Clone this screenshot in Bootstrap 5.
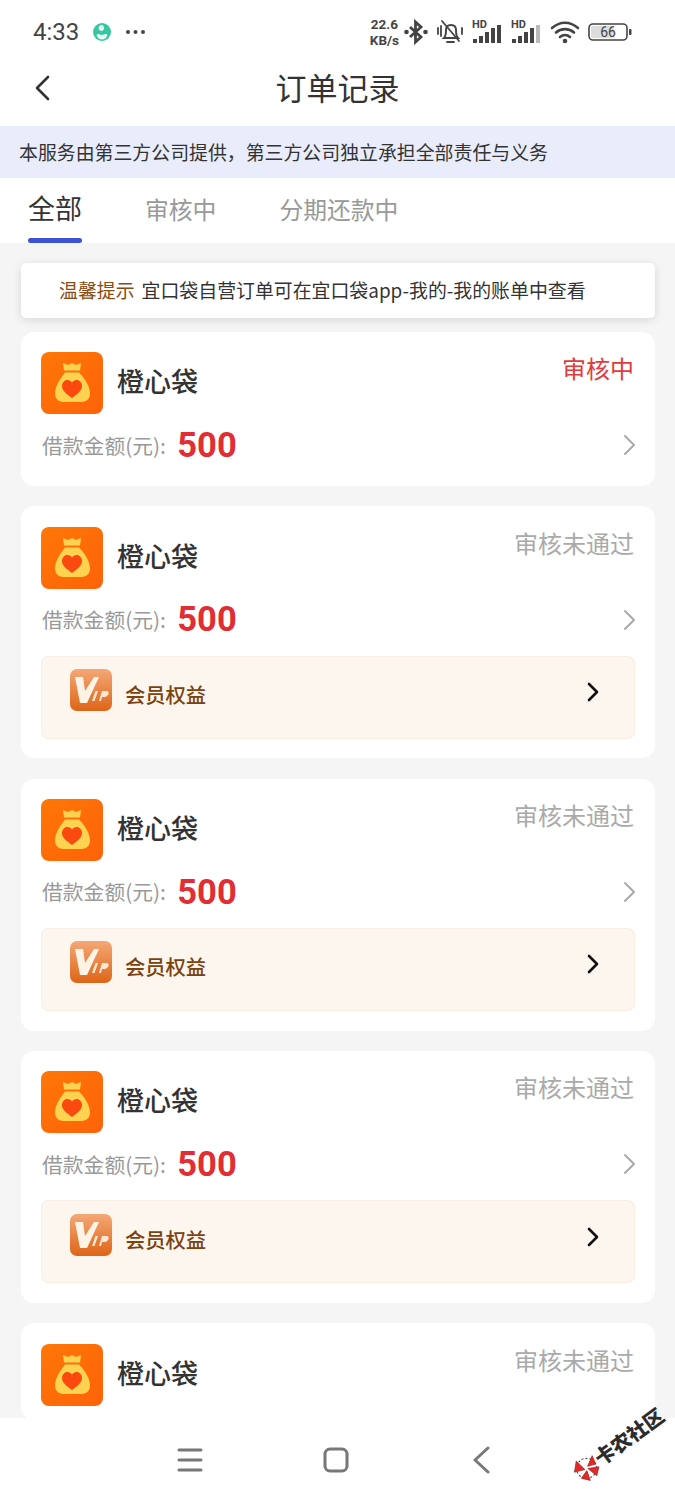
<!DOCTYPE html>
<html lang="zh-CN">

<head>
  <meta charset="UTF-8" />
  <meta name="viewport" content="width=device-width, initial-scale=1.0" />
  <title>订单记录</title>
  <link href="https://cdn.jsdelivr.net/npm/bootstrap@5.3.0/dist/css/bootstrap.min.css" rel="stylesheet" />
  <style>
    body { font-family: "Noto Sans CJK SC", "Noto Sans", sans-serif; background: #fff; color: #333; }
    .app-shell { width: 675px; height: 1500px; overflow: hidden; position: relative; }

    .status-bar { height: 63px; padding: 0 43px 0 33px; color: #444; }
    .status-time { font-family: Roboto, sans-serif; font-size: 24px; line-height: 1; }
    .status-globe { margin-left: 13px; }
    .status-dots { margin-left: 13px; }
    .status-speed { font-family: Roboto, sans-serif; font-size: 13.500px; line-height: 16px; height: 32px; font-weight: 700; text-align: center; margin-right: -3px; }
    .signal-box { position: relative; width: 31px; height: 22px; }
    .signal-box span { position: absolute; left: 0; top: -2px; font: 700 11px/11px Roboto, sans-serif; }
    .signal-box svg { position: absolute; left: 1px; bottom: 0; }
    .battery-num { font-family: Roboto, sans-serif; }

    .top-bar { height: 63px; padding-bottom: 17px; position: relative; }
    .top-title { font-size: 31px; line-height: 1; color: #333; }
    .back-btn { position: absolute; left: 33px; top: 11px; }

    .notice-bar { height: 52px; background: #e9edfb; padding-left: 19px; font-size: 18.900px; color: #333; }

    .tab-bar { height: 65px; padding-left: 28px; gap: 63px; }
    .tab-item { font-size: 23.800px; color: #999; line-height: 1; padding-top: 19px; }
    .tab-item.on { font-size: 27px; color: #333; padding-top: 16px; height: 65px; border-bottom: 5px solid transparent; position: relative; }
    .tab-item.on::after { content: ""; position: absolute; left: 0; right: 0; bottom: -5px; height: 5px; border-radius: 3px; background: #3d52d5; }

    .order-scroll { background: #f5f5f5; height: 1175px; padding: 20px 20px 0 21px; overflow: hidden; }
    .tip-strip { height: 55px; background: #fff; border-radius: 5px; box-shadow: 0 2px 10px rgba(0, 0, 0, .12); padding-left: 38px; font-size: 18.900px; color: #333; margin-bottom: 14px; }
    .tip-strip b { font-weight: 400; color: #8a4b12; margin-right: 7px; }

    .order-item { background: #fff; border-radius: 13px; padding: 20.400px 20px 14.600px 20px; margin-bottom: 20.300px; }
    .brand-icon { width: 62px; height: 62px; flex: none; }
    .brand-name { font-size: 27px; color: #333; margin-left: 14px; line-height: 58px; padding-bottom: 4px; font-weight: 500; }
    .order-state { margin-left: auto; font-size: 24px; line-height: 1; color: #aaa; align-self: flex-start; margin-top: 4px; padding-right: 1px; }
    .order-state.doing { color: #e23a3a; }
    .amount-row { height: 52px; margin-top: 5px; }
    .amount-label { font-size: 20.800px; color: #999; padding-left: 1px; }
    .amount-val { font-family: Roboto, sans-serif; font-weight: 700; font-size: 34.500px; line-height: 1; color: #e22d33; margin-left: 11.500px; }
    .amount-arrow { margin-left: auto; margin-right: -2px; }
    .vip-box { height: 83px; margin-top: 10px; margin-bottom: 5px; background: #fdf6ee; border: 1px solid #f8eee2; border-radius: 7px; padding: 0 34px 6px 28px; }
    .vip-icon { width: 42px; height: 42px; flex: none; margin-bottom: 8px; }
    .vip-text { font-size: 20.300px; font-weight: 500; color: #7a4310; margin-left: 13px; }
    .vip-arrow { margin-left: auto; margin-bottom: 4px; }

    .bottom-nav { position: absolute; left: 0; right: 0; top: 1418px; height: 82px; background: #fff; }
    .sys-btn { position: absolute; top: 28px; }
    .sys-menu { left: 176px; }
    .sys-home { left: 322px; }
    .sys-back { left: 470px; }

    .watermark { position: absolute; left: 576px; top: 1463px; transform: rotate(-36deg); transform-origin: left center; font-size: 20px; font-weight: 900; color: #2c2c2c; line-height: 1; white-space: nowrap; }
    .watermark svg { vertical-align: -6px; margin-right: 0; }
  </style>
</head>

<body>
  <svg width="0" height="0" class="position-absolute">
    <defs>
      <linearGradient id="bagBg" x1="0" y1="0" x2="1" y2="1">
        <stop offset="0" stop-color="#ff7706" />
        <stop offset="1" stop-color="#ff620a" />
      </linearGradient>
      <linearGradient id="vipBg" x1="0" y1="0" x2="0" y2="1">
        <stop offset="0" stop-color="#f4a877" />
        <stop offset="1" stop-color="#dd6517" />
      </linearGradient>
      <symbol id="bag" viewBox="0 0 62 62">
        <rect width="62" height="62" rx="8" fill="url(#bagBg)" />
        <path d="M22 11l5 2 4-2 4 2 5-2-1 7.500H23z" fill="#ffd34f" />
        <path d="M24 20.500h14c3 3 11 12 11 21 0 6-4 8.500-10 8.500H24c-6 0-10-2.500-10-8.500 0-9 8-18 10-21z" fill="#ffd34f" />
        <path d="M31 46c-5.500-4-10-7.500-10-12 0-3.400 2.500-6 5.400-6 2 0 3.600 1 4.600 2.700 1-1.700 2.600-2.700 4.600-2.700 2.900 0 5.400 2.600 5.400 6 0 4.500-4.500 8-10 12z" fill="#fb4a10" />
      </symbol>
      <symbol id="vipMark" viewBox="0 0 42 42">
        <rect width="42" height="42" rx="7" fill="url(#vipBg)" />
        <path d="M5 8h8l2 14 9-14h5L17 34h-7z" fill="#fff3e6" />
        <path d="M22 32l3.500-10h2.500l-3.500 10zM29 32l3-10h4.500c2 0 2.500 1.500 2 3s-2 3-4 3H32l-1 4z" fill="#fff3e6" opacity=".9" />
      </symbol>
      <symbol id="chevGrey" viewBox="0 0 14 22">
        <path d="M2 2l9 9-9 9" fill="none" stroke="#aaa" stroke-width="2" stroke-linecap="round" stroke-linejoin="round" />
      </symbol>
      <symbol id="chevDark" viewBox="0 0 14 22">
        <path d="M3 3l8 8-8 8" fill="none" stroke="#111" stroke-width="2.600" stroke-linecap="round" stroke-linejoin="round" />
      </symbol>
    </defs>
  </svg>

  <div class="app-shell">
    <!-- status bar -->
    <div class="status-bar d-flex align-items-center justify-content-between">
      <div class="d-flex align-items-center">
        <span class="status-time">4:33</span>
        <svg class="status-globe" width="20" height="20" viewBox="0 0 20 20">
          <circle cx="10" cy="10" r="9" fill="#36c6a0" />
          <path d="M8 3.500c2-1 4 0 4 2.500s-2 3.500-4 2.500-2-4 0-5zM4.500 13c1.500-2 3.500 0 5.500 0s3.500-2 5.500 0c-1 3-3 4.500-5.500 4.500S5.500 16 4.500 13z" fill="#e6f7f5" />
        </svg>
        <svg class="status-dots" width="21" height="6" viewBox="0 0 21 6">
          <circle cx="3" cy="3" r="2" fill="#444" />
          <circle cx="10.500" cy="3" r="2" fill="#444" />
          <circle cx="18" cy="3" r="2" fill="#444" />
        </svg>
      </div>
      <div class="d-flex align-items-center gap-2">
        <div class="status-speed">22.6<br />KB/s</div>
        <svg width="24" height="26" viewBox="0 0 24 26">
          <path d="M6 8l11 10-5.500 5V3L17 8 6 18" fill="none" stroke="#444" stroke-width="2.800" />
          <circle cx="2.500" cy="13" r="2.300" fill="#444" />
          <circle cx="21.500" cy="13" r="2.300" fill="#444" />
        </svg>
        <svg width="28" height="26" viewBox="0 0 28 26">
          <path d="M8 19c2-2 2-5 2-8 0-3 2-5 5-5s5 2 5 5c0 3 0 6 2 8z" fill="none" stroke="#444" stroke-width="2" />
          <path d="M11 23h7M6 2l17 20M2 9v6M5 7v10M26 9v6" fill="none" stroke="#444" stroke-width="1.800" stroke-linecap="round" />
        </svg>
        <div class="signal-box"><span>HD</span>
          <svg width="30" height="18" viewBox="0 0 30 18">
            <path d="M0 14h4v4H0zM6 11h4v7H6zM12 7h4v11h-4zM18 3h4v15h-4zM24 0h4v18h-4z" fill="#444" />
          </svg>
        </div>
        <div class="signal-box"><span>HD</span>
          <svg width="30" height="18" viewBox="0 0 30 18">
            <path d="M0 14h4v4H0zM6 11h4v7H6zM12 7h4v11h-4zM18 3h4v15h-4z" fill="#444" />
            <path d="M24 0h4v18h-4z" fill="#bbb" />
          </svg>
        </div>
        <svg width="30" height="24" viewBox="0 0 30 24">
          <path d="M2 8c8-7 18-7 26 0M6 12.500c5-4.500 13-4.500 18 0M10 17c3-2.500 7-2.500 10 0" fill="none" stroke="#444" stroke-width="2.600" stroke-linecap="round" />
          <circle cx="15" cy="21" r="2.300" fill="#444" />
        </svg>
        <svg width="44" height="20" viewBox="0 0 44 20">
          <rect x="1" y="2" width="38" height="16" rx="4" fill="none" stroke="#444" stroke-width="1.600" />
          <rect x="3" y="4" width="23" height="12" rx="2" fill="#ddd" />
          <rect x="41" y="7" width="2.500" height="6" rx="1" fill="#444" />
          <text class="battery-num" x="20" y="15" font-size="14" text-anchor="middle" fill="#444">66</text>
        </svg>
      </div>
    </div>

    <!-- header -->
    <div class="top-bar d-flex align-items-center justify-content-center">
      <svg class="back-btn" width="18" height="28" viewBox="0 0 18 28">
        <path d="M15 3L4 14l11 11" fill="none" stroke="#333" stroke-width="2.600" stroke-linecap="round" stroke-linejoin="round" />
      </svg>
      <span class="top-title">订单记录</span>
    </div>

    <div class="notice-bar d-flex align-items-center">本服务由第三方公司提供，第三方公司独立承担全部责任与义务</div>

    <div class="tab-bar d-flex">
      <div class="tab-item on">全部</div>
      <div class="tab-item">审核中</div>
      <div class="tab-item">分期还款中</div>
    </div>

    <div class="order-scroll">
      <div class="tip-strip d-flex align-items-center"><b>温馨提示</b>宜口袋自营订单可在宜口袋app-我的-我的账单中查看</div>

      <div class="order-item">
        <div class="d-flex align-items-center">
          <svg class="brand-icon"><use href="#bag" /></svg>
          <span class="brand-name">橙心袋</span>
          <span class="order-state doing">审核中</span>
        </div>
        <div class="amount-row d-flex align-items-center">
          <span class="amount-label">借款金额(元):</span><span class="amount-val">500</span>
          <svg class="amount-arrow" width="14" height="22"><use href="#chevGrey" /></svg>
        </div>
      </div>

      <div class="order-item">
        <div class="d-flex align-items-center">
          <svg class="brand-icon"><use href="#bag" /></svg>
          <span class="brand-name">橙心袋</span>
          <span class="order-state">审核未通过</span>
        </div>
        <div class="amount-row d-flex align-items-center">
          <span class="amount-label">借款金额(元):</span><span class="amount-val">500</span>
          <svg class="amount-arrow" width="14" height="22"><use href="#chevGrey" /></svg>
        </div>
        <div class="vip-box d-flex align-items-center">
          <svg class="vip-icon"><use href="#vipMark" /></svg>
          <span class="vip-text">会员权益</span>
          <svg class="vip-arrow" width="14" height="22"><use href="#chevDark" /></svg>
        </div>
      </div>

      <div class="order-item">
        <div class="d-flex align-items-center">
          <svg class="brand-icon"><use href="#bag" /></svg>
          <span class="brand-name">橙心袋</span>
          <span class="order-state">审核未通过</span>
        </div>
        <div class="amount-row d-flex align-items-center">
          <span class="amount-label">借款金额(元):</span><span class="amount-val">500</span>
          <svg class="amount-arrow" width="14" height="22"><use href="#chevGrey" /></svg>
        </div>
        <div class="vip-box d-flex align-items-center">
          <svg class="vip-icon"><use href="#vipMark" /></svg>
          <span class="vip-text">会员权益</span>
          <svg class="vip-arrow" width="14" height="22"><use href="#chevDark" /></svg>
        </div>
      </div>

      <div class="order-item">
        <div class="d-flex align-items-center">
          <svg class="brand-icon"><use href="#bag" /></svg>
          <span class="brand-name">橙心袋</span>
          <span class="order-state">审核未通过</span>
        </div>
        <div class="amount-row d-flex align-items-center">
          <span class="amount-label">借款金额(元):</span><span class="amount-val">500</span>
          <svg class="amount-arrow" width="14" height="22"><use href="#chevGrey" /></svg>
        </div>
        <div class="vip-box d-flex align-items-center">
          <svg class="vip-icon"><use href="#vipMark" /></svg>
          <span class="vip-text">会员权益</span>
          <svg class="vip-arrow" width="14" height="22"><use href="#chevDark" /></svg>
        </div>
      </div>

      <div class="order-item">
        <div class="d-flex align-items-center">
          <svg class="brand-icon"><use href="#bag" /></svg>
          <span class="brand-name">橙心袋</span>
          <span class="order-state">审核未通过</span>
        </div>
      </div>
    </div>

    <!-- system nav lies over the list -->
    <div class="bottom-nav">
      <svg class="sys-btn sys-menu" width="28" height="28" viewBox="0 0 28 28">
        <path d="M3 4h22M3 14h22M3 24h22" stroke="#777" stroke-width="3" stroke-linecap="round" />
      </svg>
      <svg class="sys-btn sys-home" width="28" height="28" viewBox="0 0 28 28">
        <rect x="3" y="3" width="22" height="22" rx="5" fill="none" stroke="#777" stroke-width="3" />
      </svg>
      <svg class="sys-btn sys-back" width="22" height="28" viewBox="0 0 22 28">
        <path d="M18 2L5 14l13 12" fill="none" stroke="#777" stroke-width="3" stroke-linecap="round" stroke-linejoin="round" />
      </svg>
    </div>

    <div class="watermark">
      <svg width="26" height="26" viewBox="0 0 26 26">
        <circle cx="13" cy="13" r="10" fill="#fff" stroke="#333" stroke-width="1" stroke-dasharray="2 2" />
        <path d="M11 13L1 9l8-8zM15 12L25 6l-2 9zM12 15L3 18l6 7zM14 14l3 11 7-6z" fill="#e02a2a" stroke="#a01818" stroke-width=".6" />
      </svg>卡农社区
    </div>
  </div>

  <script src="https://cdn.jsdelivr.net/npm/bootstrap@5.3.0/dist/js/bootstrap.bundle.min.js"></script>
</body>

</html>
